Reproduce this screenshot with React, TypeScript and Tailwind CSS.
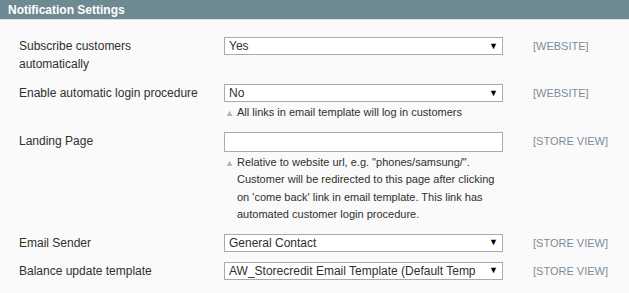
type Row = {
  label: string[];
  kind: "select" | "text";
  value?: string;
  note?: string[];
  scope: string;
  gap: string;
};

const rows: Row[] = [
  {
    label: ["Subscribe customers", "automatically"],
    kind: "select",
    value: "Yes",
    scope: "[WEBSITE]",
    gap: "mt-[17px]",
  },
  {
    label: ["Enable automatic login procedure"],
    kind: "select",
    value: "No",
    note: ["All links in email template will log in customers"],
    scope: "[WEBSITE]",
    gap: "mt-[11px]",
  },
  {
    label: ["Landing Page"],
    kind: "text",
    note: [
      'Relative to website url, e.g. "phones/samsung/".',
      "Customer will be redirected to this page after clicking",
      "on 'come back' link in email template. This link has",
      "automated customer login procedure.",
    ],
    scope: "[STORE VIEW]",
    gap: "mt-[10px]",
  },
  {
    label: ["Email Sender"],
    kind: "select",
    value: "General Contact",
    scope: "[STORE VIEW]",
    gap: "mt-[10px]",
  },
  {
    label: ["Balance update template"],
    kind: "select",
    value: "AW_Storecredit Email Template (Default Temp",
    scope: "[STORE VIEW]",
    gap: "mt-[10px]",
  },
];

function Field({ row }: { row: Row }) {
  if (row.kind === "text") {
    return <div className="h-[20px] w-[279px] bg-white border border-[#aaaaaa]" />;
  }
  return (
    <div className="h-[18px] w-[279px] bg-white border border-[#aaaaaa] flex items-center pl-[4px] pr-[4px] text-[12px] text-[#2f2f2f]">
      <span className="flex-1 overflow-hidden whitespace-nowrap">{row.value}</span>
      <span className="ml-[4px] text-[9px] text-black leading-none">▼</span>
    </div>
  );
}

export default function App() {
  return (
    <div
      className="w-[629px] h-[293px] bg-[#fafafa] overflow-hidden"
      style={{ fontFamily: '"Liberation Sans", Arial, sans-serif' }}
    >
      {/* HEADER */}
      <div className="h-[20px] bg-[#6f8992] border-b border-[#d6dfe2] pl-[8px] flex items-center">
        <span className="text-white font-bold text-[12px]">Notification Settings</span>
      </div>

      {/* ROWS */}
      {rows.map((row, i) => (
        <div key={i} className={`${row.gap} flex`}>
          <div className="w-[224px] pl-[19px] text-[12px] leading-[18px] text-[#2f2f2f]">
            {row.label.map((l) => (
              <div key={l}>{l}</div>
            ))}
          </div>

          <div className="w-[309px]">
            <Field row={row} />
            {row.note && (
              <div className="relative mt-[2px] pl-[13px] text-[11px] leading-[17.5px] text-[#2f2f2f]">
                <span className="absolute left-[1px] top-[1px] text-[9px] text-[#a9b7bf]">▲</span>
                {row.note.map((n) => (
                  <div key={n}>{n}</div>
                ))}
              </div>
            )}
          </div>

          <div className="text-[11px] leading-[18px] text-[#7c8d99]">{row.scope}</div>
        </div>
      ))}
    </div>
  );
}
